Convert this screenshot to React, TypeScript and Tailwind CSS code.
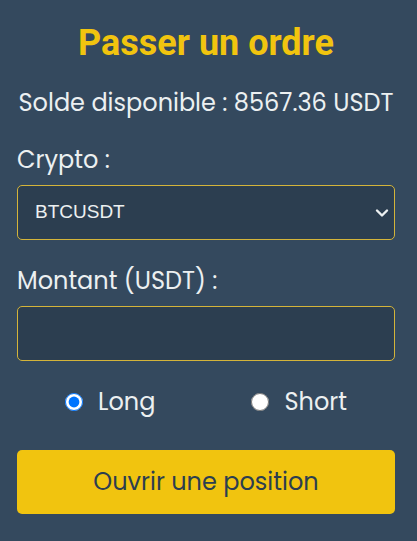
import { useState } from "react"

const cryptos = ["BTCUSDT", "ETHUSDT", "BNBUSDT", "SOLUSDT"]

export default function App() {
  const [side, setSide] = useState<"long" | "short">("long")
  const [crypto, setCrypto] = useState("BTCUSDT")
  const [amount, setAmount] = useState("")

  return (
    <div className="min-h-[541px] w-full bg-[#34495e] pl-[17px] pr-[22px] pt-[21px] text-[#ecf0f1] font-['Poppins','Inter',sans-serif]">
      <h2 className="text-center text-[36px] font-bold leading-[44px] text-[#f1c40f] font-['Roboto',sans-serif]">
        Passer un ordre
      </h2>
      <p className="mt-[20px] text-center text-[24px] leading-[36px]">
        Solde disponible : 8567.36 USDT
      </p>

      <label className="mt-[21px] block text-[24px] leading-[36px]">Crypto :</label>
      {/* border sits on the wrapper so the native select keeps the yellow edge */}
      <div className="relative mt-[7px] h-[55px] overflow-hidden rounded-[5px] border border-[#d4b43a] bg-[#2c3e50]">
        <select
          value={crypto}
          onChange={(e) => setCrypto(e.target.value)}
          className="block h-full w-full appearance-none border-0 bg-transparent px-[17px] text-[19px] text-[#ecf0f1] outline-none font-['Liberation_Sans',sans-serif]"
        >
          {cryptos.map((c) => (
            <option key={c} value={c} className="bg-[#2c3e50]">
              {c}
            </option>
          ))}
        </select>
        <svg
          className="pointer-events-none absolute right-[5px] top-[22px] h-[10px] w-[14px]"
          viewBox="0 0 14 10"
          fill="none"
          stroke="#ecf0f1"
          strokeWidth="2.4"
          strokeLinecap="round"
          strokeLinejoin="round"
        >
          <path d="M2 2.5l5 5 5-5" />
        </svg>
      </div>

      <label className="mt-[23px] block text-[24px] leading-[36px]">Montant (USDT) :</label>
      <input
        type="number"
        value={amount}
        onChange={(e) => setAmount(e.target.value)}
        className="mt-[7px] block h-[55px] w-full rounded-[5px] border border-[#d4b43a] bg-[#2c3e50] px-[18px] text-[19px] text-[#ecf0f1] outline-none"
      />

      <div className="mt-[23px] flex justify-around text-[24px] leading-[36px]">
        <label className="flex items-center gap-[15px]">
          <input
            type="radio"
            name="side"
            checked={side === "long"}
            onChange={() => setSide("long")}
            className="m-0 h-[18px] w-[18px]"
          />
          Long
        </label>
        <label className="flex items-center gap-[15px]">
          <input
            type="radio"
            name="side"
            checked={side === "short"}
            onChange={() => setSide("short")}
            className="m-0 h-[18px] w-[18px]"
          />
          Short
        </label>
      </div>

      <button
        type="button"
        className="mt-[30px] block h-[64px] w-full rounded-[5px] bg-[#f1c40f] text-[24px] text-[#2c3e50]"
      >
        Ouvrir une position
      </button>
    </div>
  )
}
